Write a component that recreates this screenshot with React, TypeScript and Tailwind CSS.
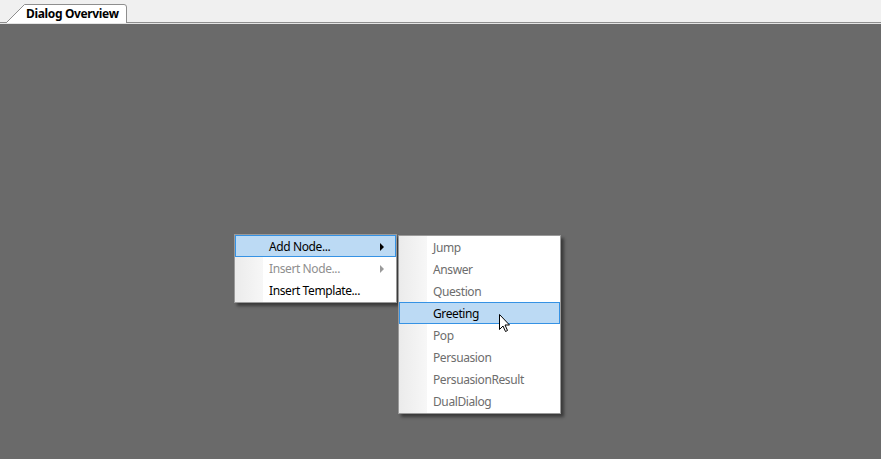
import React from "react";

const font = { fontFamily: '"Noto Sans", "Open Sans", Arial, sans-serif' };

function Arrow({ color }: { color: string }) {
  return (
    <svg width="5" height="8" viewBox="0 0 5 8" className="absolute right-[10px] top-[7px]">
      <path d="M0 0 L4 4 L0 8 Z" fill={color} />
    </svg>
  );
}

type Item = { label: string; state: "normal" | "disabled" | "hover" | "gray"; sub?: boolean };

function Menu({ items, className }: { items: Item[]; className: string }) {
  return (
    <div
      className={`absolute w-[163px] border border-[#9a9a9a] bg-white pb-[1px] shadow-[3px_3px_3px_rgba(0,0,0,0.45)] ${className}`}
    >
      <div className="absolute left-0 top-0 bottom-0 w-[28px] bg-gradient-to-r from-[#ebebeb] to-[#f7f7f7]" />
      <div className="relative flex flex-col">
        {items.map((it) => {
          const hover = it.state === "hover";
          const color =
            it.state === "disabled" ? "text-[#8f8f8f]" : it.state === "gray" ? "text-[#6d6d6d]" : "text-[#000]";
          return (
            <div
              key={it.label}
              className={`relative h-[22px] pl-[33px] text-[12px] tracking-[-0.4px] leading-[21px] ${color} ${
                hover ? "border border-[#3592e4] bg-[#bcdaf4]" : "border border-transparent"
              }`}
            >
              {it.label}
              {it.sub && <Arrow color={it.state === "disabled" ? "#9a9a9a" : "#000"} />}
            </div>
          );
        })}
      </div>
    </div>
  );
}

export default function App() {
  return (
    <div className="w-[881px] h-[459px] flex flex-col overflow-hidden" style={font}>
      <div className="h-[24px] bg-[#f0f0f0] flex flex-col">
        <div className="h-[23px] border-b border-[#8e8e8e] flex items-end pl-[4px]">
          <div className="relative z-10 h-[20px] w-[124px] mb-[-1px] flex items-center pl-[22px]">
            <svg width="124" height="20" viewBox="0 0 124 20" className="absolute inset-0">
              <path
                d="M2 20 L2.5 19.5 L20.5 1.5 L120 1.5 Q122.5 1.5 122.5 4 L122.5 20 Z"
                fill="#ffffff"
                stroke="#8e8e8e"
                strokeWidth="1"
              />
              <rect x="3" y="19" width="119" height="1" fill="#ffffff" />
            </svg>
            <span className="relative text-[12px] font-bold tracking-[-0.35px] text-black leading-none mt-[1px]">
              Dialog Overview
            </span>
          </div>
        </div>
        <div className="h-[1px] bg-[#e4e4e4]" />
      </div>
      <div className="relative flex-1 bg-[#6a6a6a]">
        <Menu
          className="left-[234px] top-[210px]"
          items={[
            { label: "Add Node...", state: "hover", sub: true },
            { label: "Insert Node...", state: "disabled", sub: true },
            { label: "Insert Template...", state: "normal" },
          ]}
        />
        <Menu
          className="left-[398px] top-[211px]"
          items={[
            { label: "Jump", state: "gray" },
            { label: "Answer", state: "gray" },
            { label: "Question", state: "gray" },
            { label: "Greeting", state: "hover" },
            { label: "Pop", state: "gray" },
            { label: "Persuasion", state: "gray" },
            { label: "PersuasionResult", state: "gray" },
            { label: "DualDialog", state: "gray" },
          ]}
        />
        <svg width="13" height="20" viewBox="0 0 13 20" className="absolute left-[498px] top-[289px]">
          <path
            d="M1.5 1.5 L1.5 16.5 L5 13 L7.5 18.5 L9.5 17.5 L7 12 L11.5 12 Z"
            fill="#ffffff"
            stroke="#000000"
            strokeWidth="1"
            strokeLinejoin="miter"
          />
        </svg>
      </div>
    </div>
  );
}
